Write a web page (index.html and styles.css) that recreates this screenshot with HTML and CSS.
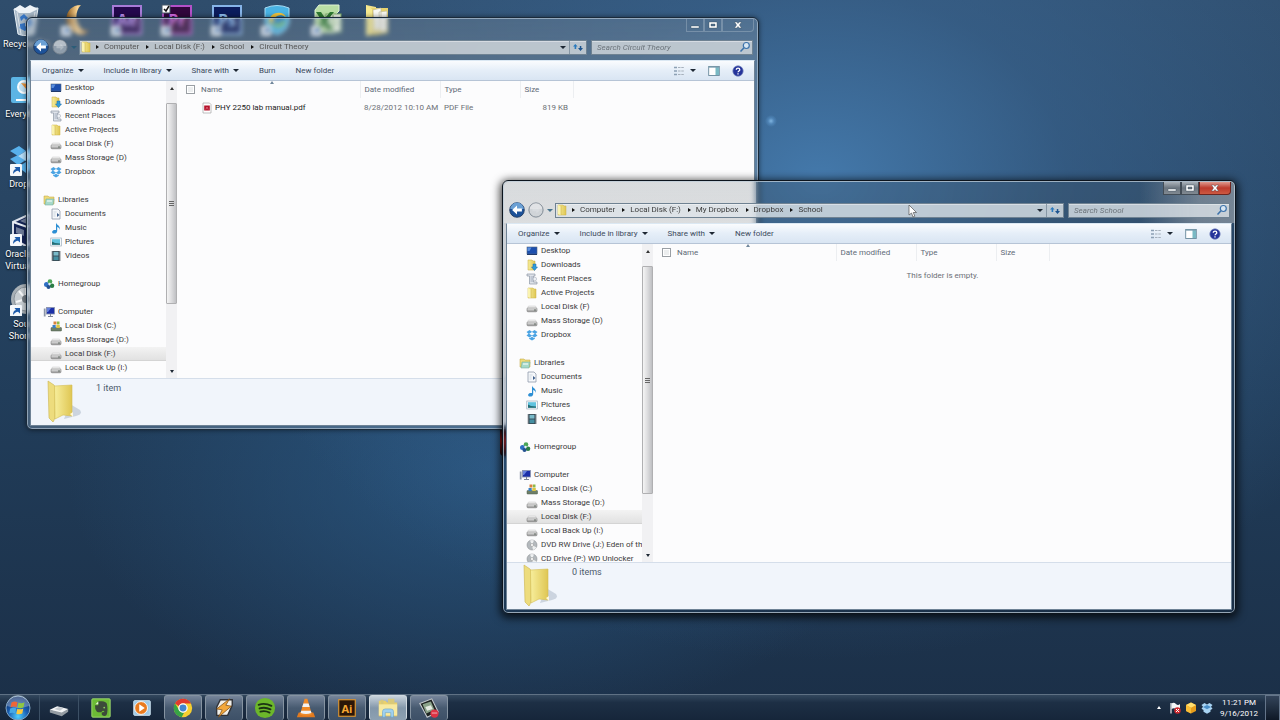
FILE: index.html
```html
<!DOCTYPE html>
<html lang="en">
<head>
<meta charset="utf-8">
<title>Desktop</title>
<link rel="stylesheet" href="styles.css">
</head>
<body>
<svg class="sprite" aria-hidden="true">
  <defs>
    <linearGradient id="gold" x1="0" x2="1"><stop offset="0" stop-color="#f7ee9c"/><stop offset="1" stop-color="#dfc653"/></linearGradient>
    <linearGradient id="disk" x1="0" y1="0" x2="0" y2="1"><stop offset="0" stop-color="#f4f4f4"/><stop offset="1" stop-color="#8c8c8c"/></linearGradient>
    <radialGradient id="orb" cx=".5" cy=".85" r=".8"><stop offset="0" stop-color="#4fd0ff"/><stop offset=".5" stop-color="#1a5fb4"/><stop offset="1" stop-color="#0a2a66"/></radialGradient>
    <linearGradient id="crescent" x1="0" x2="1"><stop offset="0" stop-color="#8a5a20"/><stop offset=".5" stop-color="#ffd894"/><stop offset="1" stop-color="#8c6030"/></linearGradient>
  </defs>
  <symbol id="i-desktop" viewBox="0 0 12 12"><rect x="1" y="2" width="10" height="7" fill="#1c4fae" stroke="#54677f" stroke-width=".6"/><path d="M1.500 2.500h4l-2 3.500h-2z" fill="#5b8fdd"/><path d="M1 9.500h10" stroke="#203a6c"/></symbol>
  <symbol id="i-downloads" viewBox="0 0 12 12"><path d="M2 1h4l1 1h2v9H2z" fill="url(#gold)" stroke="#c9a93b" stroke-width=".5"/><path d="M7 5h3v3h1.500L8.500 11.500 5.500 8H7z" fill="#2f9bd8" stroke="#1c6ba6" stroke-width=".5"/></symbol>
  <symbol id="i-recent" viewBox="0 0 12 12"><path d="M1 1h8v2H7.500v6H11v2H3.500V3H1z" fill="#dfe3ea" stroke="#8d97a5" stroke-width=".7"/><path d="M4.500 4h2.500M4.500 6h2.500M4.500 8h2.500" stroke="#8794aa" stroke-width=".7"/><circle cx="8.800" cy="6" r="1.800" fill="#eef1f6" stroke="#9aa3b0" stroke-width=".5"/></symbol>
  <symbol id="i-folder" viewBox="0 0 12 12"><path d="M2 1h5l1 1h2v9H2z" fill="url(#gold)" stroke="#cdb047" stroke-width=".5"/><path d="M2 1l3 1.500V11L2 10z" fill="#faf3af"/><path d="M5 2v9" stroke="#c5a63c" stroke-width=".5"/></symbol>
  <symbol id="i-disk" viewBox="0 0 12 12"><path d="M2.500 5h7L11 8H1z" fill="#efefef" stroke="#bbb" stroke-width=".4"/><rect x="1" y="7" width="10" height="3.800" rx="1" fill="url(#disk)" stroke="#808080" stroke-width=".6"/><path d="M8 9h2" stroke="#4f5a50" stroke-width=".8"/></symbol>
  <symbol id="i-dropbox" viewBox="0 0 12 12"><path d="M3.500 1L6 2.700 8.500 1 11.500 3 9.500 4.700l2 1.800-3 1.900L6 6.700 3.500 8.400.5 6.500l2-1.800L.5 3zM6 2.900L3.200 4.700 6 6.400l2.800-1.700zM3 9l.6.200L6 7.700l2.400 1.500L9 9v.8L6 11.500 3 9.800z" fill="#4aa3e3" fill-rule="evenodd"/></symbol>
  <symbol id="i-libraries" viewBox="0 0 12 12"><path d="M1 2h4l1 1h5v7H1z" fill="#eedb7b" stroke="#bfa23b" stroke-width=".5"/><path d="M3 5h8l-1 6H2z" fill="#a6d9ca" stroke="#6aa795" stroke-width=".5"/><path d="M4 7h5" stroke="#fff"/></symbol>
  <symbol id="i-documents" viewBox="0 0 12 12"><path d="M2 1h6l2 2v8H2z" fill="#f6f8fb" stroke="#8f9bab" stroke-width=".8"/><path d="M7 5v4l2.500-2z" fill="#40608c"/><path d="M3.500 4h3M3.500 6h2M3.500 8h2" stroke="#b4bfcd" stroke-width=".6"/></symbol>
  <symbol id="i-music" viewBox="0 0 12 12"><path d="M6 .5c.5 2.800 5 3 3.500 7.500C9.500 5.800 8 5 7.200 5v4c0 1.600-1.400 2.600-3 2.600-1.500 0-2.400-1-2-2.200.4-1.200 2-1.900 3.800-1.300z" fill="#2d8fd4"/></symbol>
  <symbol id="i-pictures" viewBox="0 0 12 12"><rect x=".8" y="2" width="10.500" height="8" fill="#f4f8fa" stroke="#8fa2b2" stroke-width=".6"/><rect x="2" y="3.200" width="8" height="5.600" fill="#5fc2de"/><path d="M2 8.800V5.500l3 1.500 5 .6v1.200z" fill="#236b73"/></symbol>
  <symbol id="i-videos" viewBox="0 0 12 12"><rect x="1.800" y="1" width="8.500" height="10" fill="#36434c"/><rect x="3.500" y="1.800" width="5" height="3.800" fill="#79bac9"/><rect x="3.500" y="6.400" width="5" height="3.800" fill="#458fa2"/><path d="M2.600 1.500v9M9.500 1.500v9" stroke="#c2cdd2" stroke-width=".7" stroke-dasharray="1 1"/></symbol>
  <symbol id="i-homegroup" viewBox="0 0 12 12"><circle cx="3.500" cy="6.500" r="2.500" fill="#2f6fc4"/><circle cx="7" cy="3.500" r="2.300" fill="#4ba557"/><circle cx="9" cy="7.800" r="2.300" fill="#2a7d44"/><circle cx="5.500" cy="9" r="2" fill="#245190"/><circle cx="6.500" cy="6" r="1.200" fill="#e4f1f3"/></symbol>
  <symbol id="i-computer" viewBox="0 0 12 12"><rect x="3.500" y="1.500" width="8" height="6.500" fill="#1b2fa8" stroke="#8b93ad" stroke-width=".8"/><path d="M4 2h4L5 6H4z" fill="#6480dd"/><path d="M.8 2.500h1.800V10.500H.8z" fill="#8c96a8"/><path d="M5 10.500h5M7.500 8v2" stroke="#7b8496"/></symbol>
  <symbol id="i-system" viewBox="0 0 12 12"><rect x="1" y="7.500" width="10.500" height="3.500" rx=".6" fill="#6d7f68" stroke="#4f5c4d" stroke-width=".5"/><path d="M2.500 5h3.200v3H2.500z" fill="#3a7fc4"/><path d="M3.500 1.500h3v3h-3z" fill="#d9843c"/><path d="M7 1.500h2.500v3H7z" fill="#8db947"/><path d="M6.300 5h3.500v3H6.300z" fill="#dfc442"/></symbol>
  <symbol id="i-disc" viewBox="0 0 12 12"><circle cx="6" cy="6" r="5" fill="#b4b9bd" stroke="#84898c" stroke-width=".5"/><path d="M6 6L4 1.500a5 5 0 014 0zM6 6l4.500 2.500A5 5 0 017 10.900z" fill="#eef0f1"/><circle cx="6" cy="6" r="1.500" fill="#fff" stroke="#888" stroke-width=".5"/></symbol>
  <symbol id="i-pdf" viewBox="0 0 12 12"><path d="M2 1h6.500l1.500 1.500V11H2z" fill="#fff" stroke="#a5a5a5" stroke-width=".7"/><rect x="3.200" y="3.500" width="5.600" height="5" fill="#b5122b"/><path d="M4.800 7.500L6 5l1.200 2.500" stroke="#e98b98" fill="none" stroke-width=".6"/></symbol>
  <symbol id="i-search" viewBox="0 0 12 12"><circle cx="7.300" cy="4.500" r="3" fill="#d7e6f3" stroke="#3d73ab" stroke-width="1.200"/><path d="M5 6.800L1.500 10.500" stroke="#3d73ab" stroke-width="1.600"/></symbol>
  <symbol id="i-refresh" viewBox="0 0 12 12"><path d="M1 5.500L3.300 3 5.600 5.500H4.200V8H2.600V5.500z" fill="#2a79bd"/><path d="M6 7l2.500 3L11 7H9.300V5H7.800V7z" fill="#1d548f"/></symbol>
  <symbol id="i-views" viewBox="0 0 12 12"><path d="M1 2.500h3M1 6h3M1 9.500h3" stroke="#8ca0b4" stroke-width="1.500"/><path d="M5 2.500h6M5 6h6M5 9.500h6" stroke="#9fa9b4" stroke-width=".9" stroke-dasharray="2.500 .8"/></symbol>
  <symbol id="i-preview" viewBox="0 0 12 12"><rect x=".7" y="1.500" width="10.600" height="9" fill="#fff" stroke="#67889b" stroke-width=".9"/><rect x="7.500" y="2" width="3.500" height="8" fill="#79b9c4"/><path d="M1 2.200h10" stroke="#7ea0b3"/></symbol>
  <symbol id="i-help" viewBox="0 0 12 12"><circle cx="6" cy="6" r="5.200" fill="#25349a" stroke="#7987bd" stroke-width=".7"/><path d="M4.300 4.700c0-2.200 3.500-2.200 3.500 0 0 1.300-1.800 1.200-1.800 2.600M6 8.300v1.300" fill="none" stroke="#fff" stroke-width="1.300"/></symbol>
  <symbol id="i-arrow-left" viewBox="0 0 18 18"><circle cx="9" cy="9" r="8.200" fill="#1d5299" stroke="#20395f" stroke-width="1"/><path d="M1.500 8A7.500 7.500 0 0116.500 8z" fill="#6ba0d4"/><path d="M9 3.800L3.500 9 9 14.200V10.600h5.500V7.400H9z" fill="#fff"/></symbol>
  <symbol id="i-arrow-right" viewBox="0 0 18 18"><circle cx="9" cy="9" r="8" fill="#c6ccd2" fill-opacity=".55" stroke="#76828d" stroke-width="1"/><path d="M2 8a7 7 0 0114 0z" fill="#fff" fill-opacity=".35"/><path d="M9.500 5l4 4-4 4v-2.500H5v-3h4.500z" fill="#e7ebee" fill-opacity=".35"/></symbol>
  <symbol id="i-big-folder" viewBox="0 0 36 44"><path d="M24 24l10 6q3 4-4 6l-12 3z" fill="#8898ab" opacity=".35"/><path d="M2 1l6 4c1 1 1 2 1 3v27c0 3-1 6-2 7L3 38z" fill="#eddc7d" stroke="#cbb34d" stroke-width=".6"/><path d="M8.500 6L26 5v31l-9-1-8 4c0-1 0-4 0-6z" fill="url(#gold)" stroke="#d4bd56" stroke-width=".6"/><path d="M24 34l3-2v5z" fill="#fff8dc"/></symbol>
  <symbol id="i-shortcut" viewBox="0 0 12 12"><rect width="12" height="12" rx="1" fill="#f4f8fc"/><path d="M3 10c0-3 1-4.500 3-5L4.500 3H10v5.500L8 6.700C6 7 4.500 8 3 10z" fill="#1d5bab"/></symbol>
</svg>

<main class="desktop">
  <ul class="shortcuts">
    <li class="shortcut c1 r1"><svg class="shortcut-art" viewBox="0 0 32 32"><path d="M4 5l24-1-4 26c-4 2-12 2-16 0z" fill="#c6d3de" fill-opacity=".8" stroke="#e9f1f7"/><path d="M4 5l6-4 5 3 5-3 8 4-8 4H9z" fill="#eef3f7"/><path d="M10 13l4-3 4 4-2 2-2-2-3 3zM20 14l3 6-5 3v-3l-2-2zM10 20l5-1v3l3 2-3 3-6-3z" fill="#3674c2"/><path d="M7 8l4 22M25 8l-4 22" stroke="#fff" opacity=".6"/></svg><span class="caption">Recycle Bin</span></li>
    <li class="shortcut c2 r1"><svg class="shortcut-art" viewBox="0 0 32 32"><path d="M20 1C4 1 0 20 14 29c7 4 12 1 14-3-10 4-18-15-8-25z" fill="url(#crescent)"/><use href="#i-shortcut" x="0" y="22" width="10" height="10"/></svg></li>
    <li class="shortcut c3 r1"><svg class="shortcut-art" viewBox="0 0 32 32"><rect x="2" y="2" width="28" height="28" fill="#24084d" stroke="#a77bd8" stroke-width="2"/><text x="16" y="22" class="tile-text tile-ae">Ae</text><use href="#i-shortcut" x="0" y="22" width="10" height="10"/></svg></li>
    <li class="shortcut c4 r1"><svg class="shortcut-art" viewBox="0 0 32 32"><rect x="2" y="2" width="28" height="28" fill="#31063c" stroke="#b451c9" stroke-width="2"/><text x="16" y="22" class="tile-text tile-pr">Pr</text><rect x="1" y="1" width="8" height="8" fill="#fff" stroke="#456"/><path d="M3 5l2 2 3-5" fill="none" stroke="#111" stroke-width="1.500"/><use href="#i-shortcut" x="0" y="22" width="10" height="10"/></svg></li>
    <li class="shortcut c5 r1"><svg class="shortcut-art" viewBox="0 0 32 32"><rect x="2" y="2" width="28" height="28" fill="#0b1c5c" stroke="#86b4e8" stroke-width="2"/><text x="16" y="22" class="tile-text tile-ps">Ps</text><use href="#i-shortcut" x="0" y="22" width="10" height="10"/></svg></li>
    <li class="shortcut c6 r1"><svg class="shortcut-art" viewBox="0 0 32 32"><path d="M4 4Q16-1 28 4V18Q26 28 16 31 6 28 4 18z" fill="#49b3e4" stroke="#a6dcf5"/><circle cx="17" cy="16" r="7" fill="#2a85c6"/><path d="M8 18c0-10 14-12 17-5-7-4-13-1-14 8z" fill="#f4c63c"/><path d="M13 20c4 3 9 1 10-3" stroke="#7fcc66" stroke-width="3" fill="none"/><use href="#i-shortcut" x="0" y="22" width="10" height="10"/></svg></li>
    <li class="shortcut c7 r1"><svg class="shortcut-art" viewBox="0 0 32 32"><path d="M8 1h20v6l-4 4v18H4V6z" fill="#b9dea5" stroke="#e0f3d4"/><rect x="15" y="10" width="15" height="18" fill="#f4fbf0" stroke="#7fb069"/><path d="M17 15h11M17 20h11M22 11v16" stroke="#83b86b"/><path d="M5 8h5l4 6 5-6h4l-7 9 6 9h-5l-4-6-4 6H4l7-9z" fill="#2f7a32"/><use href="#i-shortcut" x="0" y="22" width="10" height="10"/></svg></li>
    <li class="shortcut c8 r1"><svg class="shortcut-art" viewBox="0 0 32 32"><path d="M5 1l10 2v27L6 32z" fill="#efe08a"/><path d="M10 4h17v25l-12 2H9z" fill="#e7d36e"/><path d="M12 6l8-2v20l-7 4zM18 8l8-1v20l-7 1z" fill="#f8f8f2" stroke="#bbb79a" stroke-width=".6"/><path d="M5 1l6 4v21l-4 6H5z" fill="#f5e990"/></svg></li>
    <li class="shortcut c1 r2"><svg class="shortcut-art" viewBox="0 0 32 32"><rect x="1" y="3" width="27" height="26" rx="2" fill="#5cb4e4"/><circle cx="14" cy="13" r="6" fill="#bfe0f2" stroke="#f7fbfd" stroke-width="2"/><path d="M11 9l7 1-1 6z" fill="#e8933b"/><path d="M6 26h12M19 20l6 8" stroke="#fff" stroke-width="2"/><circle cx="25" cy="28" r="4" fill="#eef2f4"/></svg><span class="caption">Everything</span></li>
    <li class="shortcut c1 r3"><svg class="shortcut-art" viewBox="0 0 32 32"><path d="M9 2l7 5-8 5-8-5zM23 2l9 6-8 5-8-6zM0 15l8-4 8 5-8 5zM16 16l8-4 8 5-9 5zM8 23l8-5 8 5-8 6z" fill="#58b1ec"/><path d="M8 12l8-5 8 6-8 4z" fill="#b5def8"/><use href="#i-shortcut" x="0" y="20" width="12" height="12"/></svg><span class="caption">Dropbox</span></li>
    <li class="shortcut c1 r4"><svg class="shortcut-art" viewBox="0 0 32 32"><path d="M3 8L18 1l13 5-1 18-14 8L3 25z" fill="#142354" stroke="#d8dee9" stroke-width="2"/><path d="M3 8l14 5 14-7M17 13v18" stroke="#e8edf4" stroke-width="2" fill="none"/><path d="M6 13l8 3v6l-8-3zM20 16l7-4v6l-7 4zM10 7l8-4 6 3-7 4z" fill="#6e7b98"/><use href="#i-shortcut" x="0" y="20" width="12" height="12"/></svg><span class="caption">Oracle VM VirtualBox</span></li>
    <li class="shortcut c1 r5"><svg class="shortcut-art" viewBox="0 0 32 32"><circle cx="16" cy="15" r="15" fill="#a8b0b6"/><circle cx="16" cy="15" r="12" fill="#c7cdd1" stroke="#8b949b"/><path d="M16 4v11l8-7M6 18l10-3-7-8" stroke="#f4f6f7" stroke-width="2" fill="none"/><circle cx="16" cy="15" r="4" fill="#727b82"/><use href="#i-shortcut" x="0" y="21" width="12" height="12"/></svg><span class="caption">Sound Shortcut</span></li>
  </ul>
  <div class="ember"></div>

  <section class="window window-back" aria-label="Circuit Theory">
    <header class="titlebar">
      <div class="controls">
        <button class="control" aria-label="Minimize"><svg viewBox="0 0 10 8"><path d="M1 5h8v2H1z"/></svg></button>
        <button class="control" aria-label="Maximize"><svg viewBox="0 0 10 8"><path d="M1 1h8v6H1zM3 3v2h4V3z" fill-rule="evenodd"/></svg></button>
        <button class="control control-close" aria-label="Close"><svg viewBox="0 0 10 8"><path d="M1.500 1h2.300L5 2.500 6.200 1h2.300L6.400 4l2.100 3H6.200L5 5.500 3.800 7H1.500l2.100-3z"/></svg></button>
      </div>
      <div class="location">
        <button class="travel" aria-label="Back"><svg><use href="#i-arrow-left"/></svg></button>
        <button class="travel" aria-label="Forward"><svg><use href="#i-arrow-right"/></svg></button>
        <span class="history"><span class="tri tri-down"></span></span>
        <nav class="address" aria-label="Address">
          <svg class="icon"><use href="#i-folder"/></svg>
          <span class="tri tri-right"></span><a href="#">Computer</a>
          <span class="tri tri-right"></span><a href="#">Local Disk (F:)</a>
          <span class="tri tri-right"></span><a href="#">School</a>
          <span class="tri tri-right"></span><a href="#">Circuit Theory</a>
          <button class="address-drop" aria-label="Previous locations"><span class="tri tri-down"></span></button>
          <button class="address-refresh" aria-label="Refresh"><svg class="icon"><use href="#i-refresh"/></svg></button>
        </nav>
        <label class="search"><input type="search" placeholder="Search Circuit Theory" aria-label="Search Circuit Theory"><svg class="icon"><use href="#i-search"/></svg></label>
      </div>
    </header>
    <div class="client">
      <div class="toolbar">
        <button>Organize <span class="tri tri-down"></span></button>
        <button>Include in library <span class="tri tri-down"></span></button>
        <button>Share with <span class="tri tri-down"></span></button>
        <button>Burn</button>
        <button>New folder</button>
        <div class="toolbar-end">
          <button aria-label="Views"><svg class="icon"><use href="#i-views"/></svg><span class="tri tri-down"></span></button>
          <button aria-label="Preview pane"><svg class="icon"><use href="#i-preview"/></svg></button>
          <button aria-label="Help"><svg class="icon"><use href="#i-help"/></svg></button>
        </div>
      </div>
      <div class="panes">
        <nav class="tree" aria-label="Folders">
          <a href="#"><svg class="icon"><use href="#i-desktop"/></svg>Desktop</a>
          <a href="#"><svg class="icon"><use href="#i-downloads"/></svg>Downloads</a>
          <a href="#"><svg class="icon"><use href="#i-recent"/></svg>Recent Places</a>
          <a href="#"><svg class="icon"><use href="#i-folder"/></svg>Active Projects</a>
          <a href="#"><svg class="icon"><use href="#i-disk"/></svg>Local Disk (F)</a>
          <a href="#"><svg class="icon"><use href="#i-disk"/></svg>Mass Storage (D)</a>
          <a href="#"><svg class="icon"><use href="#i-dropbox"/></svg>Dropbox</a>
          <a href="#" class="root"><svg class="icon"><use href="#i-libraries"/></svg>Libraries</a>
          <a href="#"><svg class="icon"><use href="#i-documents"/></svg>Documents</a>
          <a href="#"><svg class="icon"><use href="#i-music"/></svg>Music</a>
          <a href="#"><svg class="icon"><use href="#i-pictures"/></svg>Pictures</a>
          <a href="#"><svg class="icon"><use href="#i-videos"/></svg>Videos</a>
          <a href="#" class="root"><svg class="icon"><use href="#i-homegroup"/></svg>Homegroup</a>
          <a href="#" class="root"><svg class="icon"><use href="#i-computer"/></svg>Computer</a>
          <a href="#"><svg class="icon"><use href="#i-system"/></svg>Local Disk (C:)</a>
          <a href="#"><svg class="icon"><use href="#i-disk"/></svg>Mass Storage (D:)</a>
          <a href="#" class="current"><svg class="icon"><use href="#i-disk"/></svg>Local Disk (F:)</a>
          <a href="#"><svg class="icon"><use href="#i-disk"/></svg>Local Back Up (I:)</a>
        </nav>
        <div class="scrollbar"><span class="scroll-end"><span class="tri tri-up"></span></span><span class="track"><span class="thumb"></span></span><span class="scroll-end"><span class="tri tri-down"></span></span></div>
        <div class="files">
          <table>
            <colgroup><col class="col-check"><col class="col-name"><col class="col-date"><col class="col-type"><col class="col-size"><col></colgroup>
            <thead><tr><th class="pick"><input type="checkbox" aria-label="Select all"></th><th><span class="tri tri-up sort"></span>Name</th><th>Date modified</th><th>Type</th><th>Size</th><th></th></tr></thead>
            <tbody><tr><td></td><td class="name"><svg class="icon"><use href="#i-pdf"/></svg>PHY 2250 lab manual.pdf</td><td>8/28/2012 10:10 AM</td><td>PDF File</td><td class="size">819 KB</td><td></td></tr></tbody>
          </table>
        </div>
      </div>
      <footer class="details"><svg class="details-art"><use href="#i-big-folder"/></svg><span class="count">1 item</span></footer>
    </div>
  </section>

  <section class="window window-front" aria-label="School">
    <header class="titlebar">
      <div class="controls">
        <button class="control" aria-label="Minimize"><svg viewBox="0 0 10 8"><path d="M1 5h8v2H1z"/></svg></button>
        <button class="control" aria-label="Maximize"><svg viewBox="0 0 10 8"><path d="M1 1h8v6H1zM3 3v2h4V3z" fill-rule="evenodd"/></svg></button>
        <button class="control control-close" aria-label="Close"><svg viewBox="0 0 10 8"><path d="M1.500 1h2.300L5 2.500 6.200 1h2.300L6.400 4l2.100 3H6.200L5 5.500 3.800 7H1.500l2.100-3z"/></svg></button>
      </div>
      <div class="location">
        <button class="travel" aria-label="Back"><svg><use href="#i-arrow-left"/></svg></button>
        <button class="travel" aria-label="Forward"><svg><use href="#i-arrow-right"/></svg></button>
        <span class="history"><span class="tri tri-down"></span></span>
        <nav class="address" aria-label="Address">
          <svg class="icon"><use href="#i-folder"/></svg>
          <span class="tri tri-right"></span><a href="#">Computer</a>
          <span class="tri tri-right"></span><a href="#">Local Disk (F:)</a>
          <span class="tri tri-right"></span><a href="#">My Dropbox</a>
          <span class="tri tri-right"></span><a href="#">Dropbox</a>
          <span class="tri tri-right"></span><a href="#">School</a>
          <button class="address-drop" aria-label="Previous locations"><span class="tri tri-down"></span></button>
          <button class="address-refresh" aria-label="Refresh"><svg class="icon"><use href="#i-refresh"/></svg></button>
        </nav>
        <label class="search"><input type="search" placeholder="Search School" aria-label="Search School"><svg class="icon"><use href="#i-search"/></svg></label>
      </div>
    </header>
    <div class="client">
      <div class="toolbar">
        <button>Organize <span class="tri tri-down"></span></button>
        <button>Include in library <span class="tri tri-down"></span></button>
        <button>Share with <span class="tri tri-down"></span></button>
        <button>New folder</button>
        <div class="toolbar-end">
          <button aria-label="Views"><svg class="icon"><use href="#i-views"/></svg><span class="tri tri-down"></span></button>
          <button aria-label="Preview pane"><svg class="icon"><use href="#i-preview"/></svg></button>
          <button aria-label="Help"><svg class="icon"><use href="#i-help"/></svg></button>
        </div>
      </div>
      <div class="panes">
        <nav class="tree" aria-label="Folders">
          <a href="#"><svg class="icon"><use href="#i-desktop"/></svg>Desktop</a>
          <a href="#"><svg class="icon"><use href="#i-downloads"/></svg>Downloads</a>
          <a href="#"><svg class="icon"><use href="#i-recent"/></svg>Recent Places</a>
          <a href="#"><svg class="icon"><use href="#i-folder"/></svg>Active Projects</a>
          <a href="#"><svg class="icon"><use href="#i-disk"/></svg>Local Disk (F)</a>
          <a href="#"><svg class="icon"><use href="#i-disk"/></svg>Mass Storage (D)</a>
          <a href="#"><svg class="icon"><use href="#i-dropbox"/></svg>Dropbox</a>
          <a href="#" class="root"><svg class="icon"><use href="#i-libraries"/></svg>Libraries</a>
          <a href="#"><svg class="icon"><use href="#i-documents"/></svg>Documents</a>
          <a href="#"><svg class="icon"><use href="#i-music"/></svg>Music</a>
          <a href="#"><svg class="icon"><use href="#i-pictures"/></svg>Pictures</a>
          <a href="#"><svg class="icon"><use href="#i-videos"/></svg>Videos</a>
          <a href="#" class="root"><svg class="icon"><use href="#i-homegroup"/></svg>Homegroup</a>
          <a href="#" class="root"><svg class="icon"><use href="#i-computer"/></svg>Computer</a>
          <a href="#"><svg class="icon"><use href="#i-system"/></svg>Local Disk (C:)</a>
          <a href="#"><svg class="icon"><use href="#i-disk"/></svg>Mass Storage (D:)</a>
          <a href="#" class="current"><svg class="icon"><use href="#i-disk"/></svg>Local Disk (F:)</a>
          <a href="#"><svg class="icon"><use href="#i-disk"/></svg>Local Back Up (I:)</a>
          <a href="#"><svg class="icon"><use href="#i-disc"/></svg>DVD RW Drive (J:) Eden of the</a>
          <a href="#"><svg class="icon"><use href="#i-disc"/></svg>CD Drive (P:) WD Unlocker</a>
        </nav>
        <div class="scrollbar"><span class="scroll-end"><span class="tri tri-up"></span></span><span class="track"><span class="thumb"></span></span><span class="scroll-end"><span class="tri tri-down"></span></span></div>
        <div class="files">
          <table>
            <colgroup><col class="col-check"><col class="col-name"><col class="col-date"><col class="col-type"><col class="col-size"><col></colgroup>
            <thead><tr><th class="pick"><input type="checkbox" aria-label="Select all"></th><th><span class="tri tri-up sort"></span>Name</th><th>Date modified</th><th>Type</th><th>Size</th><th></th></tr></thead>
          </table>
          <p class="empty">This folder is empty.</p>
        </div>
      </div>
      <footer class="details"><svg class="details-art"><use href="#i-big-folder"/></svg><span class="count">0 items</span></footer>
    </div>
  </section>

  <svg class="cursor" viewBox="0 0 10 14"><path d="M1 1v10l2.500-2 1.500 4 1.800-.8L5.300 8.500h3.200z" fill="#fff" stroke="#555" stroke-width=".7"/></svg>
</main>

<footer class="taskbar">
  <button class="start" aria-label="Start"><svg viewBox="0 0 26 26"><circle cx="13" cy="13" r="12" fill="url(#orb)" stroke="#7fa4c2" stroke-width="1"/><path d="M2 11a11 11 0 0122 0Q13 15 2 11z" fill="#fff" opacity=".3"/><path d="M6.500 7.500q3-1.700 6-.3l-1 5q-3-1.300-6 .2z" fill="#ee6637"/><path d="M13.500 7.600q3 1.300 6-.3l-1 5q-3 1.500-6 .3z" fill="#8fc743"/><path d="M5.200 13.500q3-1.500 6-.2l-1 5q-3-1.300-6 .2z" fill="#45a9e6"/><path d="M12.300 13.700q3 1.300 6-.3l-1 5q-3 1.500-6 .3z" fill="#fcc93c"/></svg></button>
  <button class="task task-drive" aria-label="Drive"><svg viewBox="0 0 24 24"><path d="M2 14l8-4 12 3-7 6z" fill="#f3f5f6"/><path d="M2 14l13 3v4L2 17zM15 17l7-4v3l-7 5z" fill="#949ca3"/><path d="M7 13l5-2 5 1-4 3z" fill="#c5cacf"/></svg></button>
  <button class="task" aria-label="Evernote"><svg viewBox="0 0 24 24"><rect x="2" y="2" width="20" height="20" rx="1" fill="#6cbb35" stroke="#a0dc70"/><path d="M9 4.500h4q5 .5 5.500 3 1.500 8-.5 12-1 1.500-3.500 1-2.500-1-1.500-3.500 1-1 2.500-.3.500-1.500-1-1.700-1.500 0-2 1.500-3 .5-5-.5-2.500-3-2-7h3.500z" fill="#3c4a3a"/><path d="M6 8l3-3v3z" fill="#e7f4dd"/><circle cx="15.500" cy="11.500" r="1" fill="#8fce63"/></svg></button>
  <button class="task" aria-label="Media Player"><svg viewBox="0 0 24 24"><rect x="3" y="4" width="18" height="16" rx="1" fill="#9ecae8" stroke="#d7ebf8"/><circle cx="11" cy="12" r="7" fill="#e97b20" stroke="#fff"/><path d="M9 8l6 4-6 4z" fill="#fff"/></svg></button>
  <button class="task open" aria-label="Chrome"><svg viewBox="0 0 24 24"><circle cx="12" cy="12" r="10" fill="#f6cf30"/><path d="M3.300 7A10 10 0 0120.700 7H12a5 5 0 00-4.500 3z" fill="#e03a2f"/><path d="M3.300 7l5 8a5 5 0 005 2l-2.800 5A10 10 0 013.300 7z" fill="#37a445"/><circle cx="12" cy="12" r="4.500" fill="#4285cf" stroke="#fff" stroke-width="1.400"/></svg></button>
  <button class="task open" aria-label="Winamp"><svg viewBox="0 0 24 24"><path d="M8 3h13v6l-5 11H4V11z" fill="#f1efe9" stroke="#303238" stroke-width="1.500"/><path d="M18 2L4 13l6 1-4 8 14-12-6-1z" fill="#f3a83c" stroke="#7a4c14" stroke-width=".8"/></svg></button>
  <button class="task open" aria-label="Spotify"><svg viewBox="0 0 24 24"><circle cx="12" cy="12" r="11" fill="#6cb72b"/><path d="M5 8.500q7-2.500 14 1.200M6 12.500q6-2 12 1M7 16q5-1.500 10 1" fill="none" stroke="#1c3313" stroke-width="2" stroke-linecap="round"/></svg></button>
  <button class="task open" aria-label="VLC"><svg viewBox="0 0 24 24"><path d="M4 17h16l2 5H2z" fill="#e17a1f"/><path d="M10.500 2h3l5 17q-6 3-13 0z" fill="#ef8a28"/><path d="M9.200 7h5.600l1.300 4H7.900zM6.800 15h10.400l.7 2.500q-6 2-11.800 0z" fill="#f2f2f2"/></svg></button>
  <button class="task open" aria-label="Illustrator"><svg viewBox="0 0 24 24"><rect x="3" y="3" width="18" height="18" fill="#2b1608" stroke="#e49a2e" stroke-width="1.200"/><text x="12" y="17" class="tile-text tile-ai">Ai</text></svg></button>
  <button class="task open active" aria-label="Explorer"><svg viewBox="0 0 24 24"><path d="M2 4h7l2 2h11v15H2z" fill="#ead06a"/><path d="M4 3h3v5H4zM12 2h7v6h-7z" fill="#d9c97a"/><path d="M2 8h20v12H2z" fill="#f7e9a0"/><path d="M6 22v-6q0-3 3-3h6q3 0 3 3v6h-3v-5H9v5z" fill="#9fd0ef" stroke="#5d9ec9" stroke-width=".6"/></svg></button>
  <button class="task open" aria-label="Screen recorder"><svg viewBox="0 0 24 24"><path d="M2 7l13-5 7 14-12 6z" fill="#1f2422" stroke="#c6cbd0" stroke-width="1.200"/><path d="M5 8l9-3 4 9-9 4z" fill="#8ba38a"/><path d="M8 11l6-2 2 4-6 2z" fill="#e5ebe2"/><circle cx="18" cy="18" r="4.500" fill="#dd3344"/><path d="M15 17.500h6" stroke="#f3b9be"/></svg></button>
  <div class="tray">
    <span class="tri tri-up"></span>
    <svg class="icon" viewBox="0 0 12 12"><path d="M2 1v10.500" stroke="#e9edf0" stroke-width="1.200"/><path d="M2.500 1.500Q5 0 7 2t4 0v5Q9 8.500 7 7T2.500 7z" fill="#f3f5f7"/><circle cx="8.500" cy="8.500" r="3.200" fill="#cf2a2f"/><path d="M7 7l3 3M10 7l-3 3" stroke="#fff"/></svg>
    <svg class="icon" viewBox="0 0 12 12"><path d="M6 .5l5 2.500v6L6 11.500 1 9V3z" fill="#e69d1c"/><path d="M6 .5L11 3 6 5.700 1 3z" fill="#ffdf70"/><path d="M1 3l5 2.700v5.800L1 9z" fill="#f8bd37"/></svg>
    <svg class="icon" viewBox="0 0 12 12"><path d="M3.500 1L6 2.500 8.500 1l3 2-1.500 1.800 1.500 1.900-2 1.200V9.800L6 11.800 2.500 9.800V7.900L.5 6.700 2 4.800.5 3z" fill="#a9d4f3"/><path d="M2 5l4-2 4 2-4 2.200z" fill="#4a8fc9"/></svg>
    <div class="clock"><time>11:21 PM</time><time>9/16/2012</time></div>
    <button class="peek" aria-label="Show desktop"></button>
  </div>
</footer>
</body>
</html>
```
FILE: styles.css
```css
* { box-sizing: border-box; }

body {
  margin: 0;
  height: 100vh;
  display: flex;
  flex-direction: column;
  overflow: hidden;
  font: 8px/14px Roboto, "Noto Sans", sans-serif;
  color: #3a3a3a;
  background:
    radial-gradient(circle at 771px 121px, #7fb4e0 0, #5d97cc88 3px, transparent 6px),
    radial-gradient(ellipse 620px 480px at 64% 25%, #4479ab 0, #3b689690 40%, transparent 100%),
    radial-gradient(ellipse 420px 260px at 38% 65%, #2b5a86cc 0, transparent 100%),
    linear-gradient(#2f4d6c, #213d5a 55%, #1b2f47);
}

button {
  margin: 0;
  padding: 0;
  border: 0;
  background: none;
  font: inherit;
  color: inherit;
  display: flex;
  align-items: center;
  justify-content: center;
}

a { color: inherit; text-decoration: none; }
.sprite { position: absolute; width: 0; height: 0; }
.icon { width: 12px; height: 12px; flex: none; }

.tri { flex: none; width: 0; height: 0; border: 2px solid transparent; }
.tri-down { border-width: 3px 3px 0; border-top-color: #1d2733; }
.tri-up { border-width: 0 2px 3px; border-bottom-color: #333; }
.tri-right { border-width: 2px 0 2px 3px; border-left-color: #111; }

/* Desktop */
.desktop { position: relative; flex: 1; min-height: 0; }

.shortcuts {
  margin: 0;
  padding: 4px 0 0;
  list-style: none;
  display: grid;
  grid-template-columns: 52px repeat(7, 50px);
  grid-auto-rows: 70px;
}
.shortcut {
  display: flex;
  flex-direction: column;
  align-items: center;
  gap: 2px;
  color: #fff;
  text-shadow: 0 1px 2px #000;
  text-align: center;
  font-size: 9px;
  line-height: 12px;
}
.shortcut-art { width: 32px; height: 32px; flex: none; }
.caption { max-width: 52px; }
.c1 { grid-column: 1; } .c2 { grid-column: 2; } .c3 { grid-column: 3; } .c4 { grid-column: 4; }
.c5 { grid-column: 5; } .c6 { grid-column: 6; } .c7 { grid-column: 7; } .c8 { grid-column: 8; }
.r1 { grid-row: 1; } .r2 { grid-row: 2; } .r3 { grid-row: 3; } .r4 { grid-row: 4; } .r5 { grid-row: 5; }

.tile-text { font: bold 16px "Open Sans", sans-serif; text-anchor: middle; text-shadow: none; }
.tile-ae { fill: #b98cf0; }
.tile-pr { fill: #d66be8; }
.tile-ps { fill: #8fc0f5; }
.tile-ai { font-size: 12px; fill: #f5a733; }

.ember {
  position: absolute;
  left: 500px;
  top: 426px;
  width: 40px;
  height: 30px;
  border-radius: 4px;
  background: linear-gradient(#0b0f18, #8c1414 50%, #120b12);
}

/* Explorer windows */
.window {
  position: absolute;
  display: flex;
  flex-direction: column;
  padding: 0 3px 3px;
  border: 1px solid #1a2a3a;
  border-radius: 6px;
  backdrop-filter: blur(2px);
}
.window-back {
  left: 26px;
  top: 17px;
  width: 733px;
  height: 413px;
  background: linear-gradient(#96a0a944, #98a2aa55 42px, #7b93ab66);
  box-shadow: inset 0 0 0 1px #b6c6d5aa, 0 0 5px #0008;
}
.window-front {
  left: 502px;
  top: 180px;
  width: 734px;
  height: 434px;
  background:
    linear-gradient(90deg, transparent 87%, #a3a9af88 95%, #98a0a9aa) top / 100% 42px no-repeat,
    linear-gradient(#40505e44, #3c4a5644 42px, #16263a33 45px, #16263a55);
  border-color: #0c141d;
  box-shadow: inset 0 0 0 1px #c3d0dbbb, 0 2px 9px 2px #000b;
}
.window-front::before {
  content: "";
  position: absolute;
  inset: 1px auto auto 1px;
  width: 252px;
  height: 41px;
  border-radius: 5px 0 0;
  background: linear-gradient(#f4f4f455, #f0f0f077);
}

.titlebar { position: relative; flex: none; display: flex; flex-direction: column; }
.controls { display: flex; align-self: flex-end; height: 13px; margin: 1px 1px 0 0; }
.control { width: 18px; height: 13px; border: 1px solid #b0bfcc66; border-top: 0; }
.control svg { width: 10px; height: 8px; fill: #fff; stroke: #364656; stroke-width: .4; }
.control-close { width: 32px; border-radius: 0 0 4px 0; }
.window-front .control { background: linear-gradient(#a9b1b9, #6b757f 50%, #818a92); border-color: #424c56; }
.window-front .control-close { background: linear-gradient(#e09a8e, #bd3a2c 50%, #cd5a43); border-color: #6d2620; }

.location { display: flex; align-items: center; height: 18px; margin: 6px 2px 4px 3px; }
.travel { width: 16px; height: 16px; flex: none; margin-right: 3px; }
.travel svg { width: 16px; height: 16px; }
.history { width: 8px; flex: none; opacity: .8; }
.history .tri { display: block; border-top-color: #235a78; }

.address, .search {
  display: flex;
  align-items: center;
  height: 15px;
  border: 1px solid #6f8292;
  background: #dde3e8cc;
  box-shadow: inset 0 1px #fff6;
}
.window-back .address, .window-back .search { color: #555; background: #d6dbdfcc; }
.address { flex: 1; min-width: 0; }
.address a { padding: 0 7px 0 5px; white-space: nowrap; }
.address .icon { margin-right: 4px; }
.address-drop { margin-left: auto; width: 13px; height: 13px; }
.address-refresh { width: 17px; height: 13px; border-left: 1px solid #8797a5; }
.address .address-refresh .icon { margin: 0; }
.search { width: 162px; margin-left: 4px; padding-right: 1px; }
.search input {
  flex: 1;
  min-width: 0;
  height: 13px;
  padding: 0 5px;
  border: 0;
  background: none;
  font: italic 8px/13px Roboto, sans-serif;
  color: #333;
}
.search input::placeholder { color: #6c747b; opacity: 1; }

.client {
  position: relative;
  flex: 1;
  min-height: 0;
  display: flex;
  flex-direction: column;
  background: #fcfcfd;
  border: 1px solid #6e8295;
  border-top-color: #dbe8f3;
}

.toolbar {
  flex: none;
  display: flex;
  align-items: center;
  gap: 20px;
  height: 20px;
  padding: 0 10px 0 11px;
  color: #3b4a5d;
  border-bottom: 1px solid #b6c4d6;
  background: linear-gradient(#fafcfe, #e5eef8 50%, #d9e5f3);
}
.toolbar button { gap: 4px; white-space: nowrap; }
.toolbar-end { display: flex; gap: 12px; margin-left: auto; }
.toolbar-end button:first-child { gap: 5px; }

.panes {
  flex: 1;
  min-height: 0;
  display: grid;
  grid-template-columns: 135px 11px 1fr;
}
.tree { min-width: 0; overflow: hidden; white-space: nowrap; }
.tree a { display: flex; align-items: center; gap: 3px; height: 14px; padding-left: 19px; line-height: 16px; }
.tree .root { margin-top: 14px; padding-left: 12px; }
.tree .current { background: linear-gradient(#f3f3f3, #e0e0e0); box-shadow: inset 0 -1px #d4d4d4; }

.scrollbar { display: flex; flex-direction: column; background: #f1f1f3; }
.scroll-end { flex: none; height: 14px; display: flex; align-items: center; justify-content: center; }
.scroll-end .tri-down { border-width: 3px 2px 0; }
.track { flex: 1; padding-top: 8px; }
.thumb {
  display: flex;
  align-items: center;
  justify-content: center;
  height: 77%;
  border: 1px solid #b0b0b2;
  border-radius: 1px;
  background: linear-gradient(90deg, #f5f5f5, #dcdcde 50%, #bfc0c3);
}
.window-front .thumb { height: 81%; }
.thumb::before { content: ""; width: 5px; height: 5px; background: repeating-linear-gradient(#666 0 1px, transparent 1px 2px); }

.files { min-width: 0; padding-left: 1px; }
table { width: 100%; table-layout: fixed; border-collapse: collapse; color: #6b6f75; }
.col-check { width: 23px; }
.col-name { width: 159px; }
.col-date, .col-type { width: 80px; }
.col-size { width: 53px; }
th { position: relative; height: 17px; padding: 0 3px 0 4px; font-weight: 400; text-align: left; color: #5f6b78; border-right: 1px solid #eceef1; white-space: nowrap; }
th:nth-child(2) { padding-left: 0; }
th:first-child, th:last-child { border-right: 0; }
.pick { padding: 0 0 0 8px; }
.pick input { appearance: none; display: block; width: 9px; height: 9px; margin: 0; border: 1px solid #9a9fa4; background: #eceeef; box-shadow: inset 0 0 0 1px #fff; }
.sort { position: absolute; left: 69px; top: 0; border-bottom-color: #71879c; }
td { height: 20px; padding: 0 3px 0 4px; white-space: nowrap; }
td.name { display: flex; align-items: center; gap: 2px; padding: 0; color: #222; }
td.size { text-align: right; padding-right: 5px; }
.empty { margin: 0; padding-top: 8px; text-align: center; color: #6b6f75; }

.details {
  flex: none;
  display: flex;
  gap: 14px;
  height: 47px;
  padding: 1px 0 0 15px;
  font-size: 9px;
  line-height: 17px;
  color: #4c5a6b;
  background: #f1f5fb;
  border-top: 1px solid #d5deea;
}
.details-art { width: 36px; height: 44px; flex: none; }

.cursor { position: absolute; left: 908px; top: 204px; width: 10px; height: 14px; }

/* Taskbar */
.taskbar {
  position: relative;
  flex: none;
  display: flex;
  align-items: stretch;
  gap: 3px;
  height: 26px;
  padding-left: 4px;
  border-top: 1px solid #5f7184;
  background: linear-gradient(#33485e, #1d2f45 30%, #16263a);
}
.start { width: 28px; }
.start svg { width: 26px; height: 26px; }
.task { width: 38px; }
.task svg { width: 22px; height: 22px; }
.task-drive { width: 40px; margin-left: 4px; border: solid #3c5065; border-width: 0 1px; }
.open {
  border: 1px solid #8593a1;
  border-bottom: 0;
  border-radius: 3px;
  background: linear-gradient(#76859a, #475a70 50%, #3d5067);
}
.active { background: linear-gradient(#c9d3dc, #8397aa 50%, #8da1b2); border-color: #d0d9e0; }

.tray { display: flex; align-items: center; gap: 4px; margin-left: auto; color: #fff; }
.tray > .tri-up { border-bottom-color: #fff; margin-right: 4px; }
.clock { display: flex; flex-direction: column; width: 44px; text-align: center; line-height: 11px; }
.peek { align-self: stretch; width: 15px; border: 1px solid #64758a; border-bottom: 0; background: linear-gradient(#33445a, #0e1826); }
```
